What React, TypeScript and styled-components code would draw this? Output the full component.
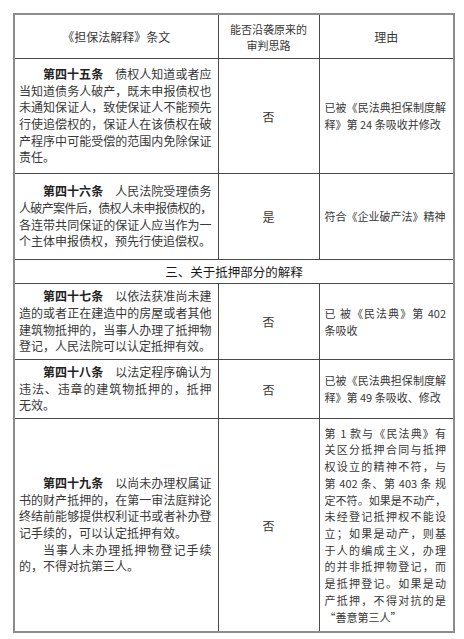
import { FC } from 'react'
import styled, { createGlobalStyle } from 'styled-components'

interface IParagraph {
   lead?: string
   lines: string[]
}

interface IRow {
   height: number
   clause: IParagraph[]
   verdict: string
   reason: string[]
}

const GlobalStyle = createGlobalStyle`
   body {
      margin: 0;
      background: #fff;
      font-family: "Noto Sans CJK SC", "Noto Sans", sans-serif;
      color: #383838;
   }
`

const upperRows: IRow[] = [
   {
      height: 114,
      clause: [
         {
            lead: '第四十五条',
            lines: [
               '债权人知道或者应',
               '当知道债务人破产，既未申报债权也',
               '未通知保证人，致使保证人不能预先',
               '行使追偿权的，保证人在该债权在破',
               '产程序中可能受偿的范围内免除保证',
               '责任。',
            ],
         },
      ],
      verdict: '否',
      reason: ['已被《民法典担保制度解', '释》第 24 条吸收并修改'],
   },
   {
      height: 85,
      clause: [
         {
            lead: '第四十六条',
            lines: [
               '人民法院受理债务',
               '人破产案件后，债权人未申报债权的，',
               '各连带共同保证的保证人应当作为一',
               '个主体申报债权，预先行使追偿权。',
            ],
         },
      ],
      verdict: '是',
      reason: ['符合《企业破产法》精神'],
   },
]

const lowerRows: IRow[] = [
   {
      height: 75,
      clause: [
         {
            lead: '第四十七条',
            lines: [
               '以依法获准尚未建',
               '造的或者正在建造中的房屋或者其他',
               '建筑物抵押的，当事人办理了抵押物',
               '登记，人民法院可以认定抵押有效。',
            ],
         },
      ],
      verdict: '否',
      reason: ['已 被《民法典》第 402', '条吸收'],
   },
   {
      height: 58,
      clause: [
         {
            lead: '第四十八条',
            lines: ['以法定程序确认为', '违法、违章的建筑物抵押的，抵押', '无效。'],
         },
      ],
      verdict: '否',
      reason: ['已被《民法典担保制度解', '释》第 49 条吸收、修改'],
   },
   {
      height: 212,
      clause: [
         {
            lead: '第四十九条',
            lines: [
               '以尚未办理权属证',
               '书的财产抵押的，在第一审法庭辩论',
               '终结前能够提供权利证书或者补办登',
               '记手续的，可以认定抵押有效。',
            ],
         },
         { lines: ['当事人未办理抵押物登记手续', '的，不得对抗第三人。'] },
      ],
      verdict: '否',
      reason: [
         '第 1 款与《民法典》有',
         '关区分抵押合同与抵押',
         '权设立的精神不符，与',
         '第 402 条、第 403 条 规',
         '定不符。如果是不动产，',
         '未经登记抵押权不能设',
         '立；如果是动产，则基',
         '于人的编成主义，办理',
         '的并非抵押物登记，而',
         '是抵押登记。如果是动',
         '产抵押，不得对抗的是',
         '“善意第三人”',
      ],
   },
]

const ClauseText: FC<{ paragraphs: IParagraph[] }> = ({ paragraphs }) => (
   <>
      {paragraphs.map((p, pi) =>
         p.lines.map((line, li) => {
            const isLast = li === p.lines.length - 1
            const tight = line.length > 16
            return (
               <Line key={`${pi}-${li}`} $indent={li === 0} $justify={!isLast} $tight={tight}>
                  {li === 0 && p.lead && (
                     <>
                        <Lead>{p.lead}</Lead>
                        {'\u3000'}
                     </>
                  )}
                  {line}
               </Line>
            )
         })
      )}
   </>
)

const ReasonText: FC<{ lines: string[] }> = ({ lines }) => (
   <>
      {lines.map((line, i) => (
         <Line key={i} $justify={lines.length > 1 && i < lines.length - 1}>
            {line}
         </Line>
      ))}
   </>
)

const TableRow: FC<{ row: IRow }> = ({ row }) => (
   <tr>
      <ClauseCell $height={row.height}>
         <ClauseText paragraphs={row.clause} />
      </ClauseCell>
      <VerdictCell>{row.verdict}</VerdictCell>
      <ReasonCell>
         <ReasonText lines={row.reason} />
      </ReasonCell>
   </tr>
)

export default function App() {
   return (
      <Page>
         <GlobalStyle />
         <Frame>
            <Sheet>
               <colgroup>
                  <col style={{ width: 203 }} />
                  <col style={{ width: 101 }} />
                  <col style={{ width: 134 }} />
               </colgroup>
               <thead>
                  <tr>
                     <HeadCell>《担保法解释》条文</HeadCell>
                     <HeadCell $small>
                        能否沿袭原来的
                        <br />
                        审判思路
                     </HeadCell>
                     <HeadCell>理由</HeadCell>
                  </tr>
               </thead>
               <tbody>
                  {upperRows.map(row => (
                     <TableRow key={row.clause[0].lead} row={row} />
                  ))}
                  <tr>
                     <SectionCell colSpan={3}>三、关于抵押部分的解释</SectionCell>
                  </tr>
                  {lowerRows.map(row => (
                     <TableRow key={row.clause[0].lead} row={row} />
                  ))}
               </tbody>
            </Sheet>
         </Frame>
      </Page>
   )
}

const Page = styled.div`
   padding: 13px;
`

const Frame = styled.div`
   width: fit-content;
   border: 2px solid #8c8c8c;
`

const Sheet = styled.table`
   width: 438px;
   table-layout: fixed;
   border-collapse: collapse;
   border-style: hidden;

   td,
   th {
      border: 1px solid #4a4a4a;
   }
`

const HeadCell = styled.th<{ $small?: boolean }>`
   height: 43px;
   padding: 0;
   font-weight: normal;
   font-size: ${props => (props.$small ? '11px' : '12px')};
   line-height: 16px;
   text-align: center;
   vertical-align: middle;
`

const ClauseCell = styled.td<{ $height: number }>`
   height: ${props => props.$height}px;
   padding: 0 6px 0 4px;
   font-size: 12px;
   line-height: 16.7px;
   vertical-align: middle;
`

const VerdictCell = styled.td`
   padding: 0;
   font-size: 12px;
   text-align: center;
   vertical-align: middle;
`

const ReasonCell = styled.td`
   padding: 0 7px 0 5px;
   font-size: 11px;
   line-height: 16.7px;
   vertical-align: middle;
`

const SectionCell = styled.td`
   height: 23px;
   padding: 0;
   font-size: 12.5px;
   font-weight: normal;
   text-align: center;
   vertical-align: middle;
   color: #1a1a1a;
`

const Line = styled.span<{ $indent?: boolean; $justify?: boolean; $tight?: boolean }>`
   display: block;
   white-space: nowrap;
   text-indent: ${props => (props.$indent ? '2em' : '0')};
   text-align: ${props => (props.$justify ? 'justify' : 'left')};
   text-align-last: ${props => (props.$justify ? 'justify' : 'auto')};
   letter-spacing: ${props => (props.$tight ? '-0.75px' : '0')};
`

const Lead = styled.b`
   font-weight: bold;
   color: #222;
`
